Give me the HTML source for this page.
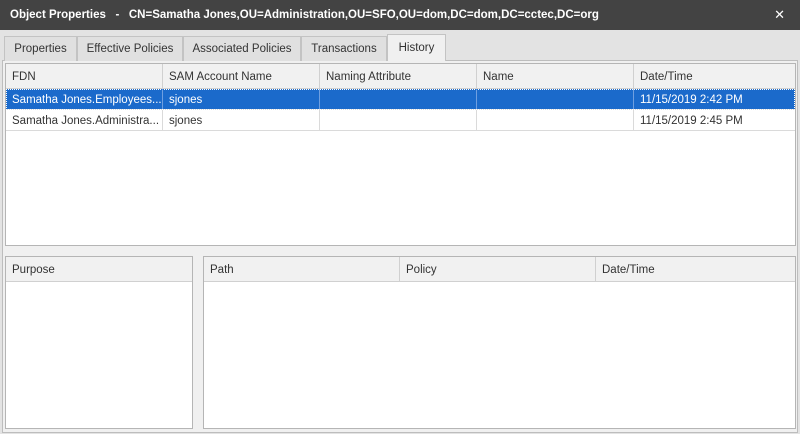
<!DOCTYPE html>
<html><head><style>
*{margin:0;padding:0;box-sizing:border-box}
body{width:800px;height:434px;background:#e3e3e3;font-family:"Liberation Sans",sans-serif;font-size:11.5px;color:#333;position:relative;overflow:hidden}
.a{position:absolute}
.title{left:0;top:0;width:800px;height:30px;background:#434343;color:#fff;font-weight:bold;font-size:11.5px;line-height:30px;padding-left:10px;white-space:pre}
.x{right:15px;top:7px;color:#fff;font-size:13px}
.tab{top:36px;height:25px;background:#e0e0e0;border:1px solid #c3c3c3;border-bottom:none;line-height:24px;text-align:center}
.panel{left:2px;top:60px;width:796px;height:373px;background:#f0f0f0;border:1px solid #bdbdbd}
.box{background:#fff;border:1px solid #b5b5b5}
.hdr{height:25px;background:#f1f1f1;border-bottom:1px solid #d0d0d0;position:relative}
.hc{position:absolute;top:0;height:24px;line-height:26px;padding-left:6px;border-right:1px solid #d0d0d0}
.row{position:absolute;left:0;height:21px;width:100%;border-bottom:1px solid #dadada}
.c{position:absolute;top:0;height:20px;line-height:22px;padding-left:6px;border-right:1px solid #dadada;white-space:nowrap;overflow:hidden}
.sel{background:#1b6acb;color:#fff;outline:1px dotted #fff;outline-offset:-1px}
.sel .c{border-right-color:#6f9fe0}
</style></head><body>
<div class="a title">Object Properties   -   CN=Samatha Jones,OU=Administration,OU=SFO,OU=dom,DC=dom,DC=cctec,DC=org</div>
<div class="a x">✕</div>
<div class="a panel"></div>
<div class="a tab" style="left:4px;width:73px">Properties</div>
<div class="a tab" style="left:77px;width:106px">Effective Policies</div>
<div class="a tab" style="left:183px;width:118px">Associated Policies</div>
<div class="a tab" style="left:301px;width:86px">Transactions</div>
<div class="a tab" style="left:387px;top:34px;height:27px;width:59px;background:#f0f0f0;line-height:27px">History</div>

<div class="a box" style="left:5px;top:63px;width:791px;height:183px">
 <div class="hdr">
  <div class="hc" style="left:0;width:157px">FDN</div>
  <div class="hc" style="left:157px;width:157px">SAM Account Name</div>
  <div class="hc" style="left:314px;width:157px">Naming Attribute</div>
  <div class="hc" style="left:471px;width:157px">Name</div>
  <div class="hc" style="left:628px;width:161px;border:none">Date/Time</div>
 </div>
 <div class="row sel" style="top:25px">
  <div class="c" style="left:0;width:157px">Samatha Jones.Employees....</div>
  <div class="c" style="left:157px;width:157px">sjones</div>
  <div class="c" style="left:314px;width:157px"></div>
  <div class="c" style="left:471px;width:157px"></div>
  <div class="c" style="left:628px;width:161px;border:none">11/15/2019 2:42 PM</div>
 </div>
 <div class="row" style="top:46px">
  <div class="c" style="left:0;width:157px">Samatha Jones.Administra...</div>
  <div class="c" style="left:157px;width:157px">sjones</div>
  <div class="c" style="left:314px;width:157px"></div>
  <div class="c" style="left:471px;width:157px"></div>
  <div class="c" style="left:628px;width:161px;border:none">11/15/2019 2:45 PM</div>
 </div>
</div>

<div class="a box" style="left:5px;top:256px;width:188px;height:173px">
 <div class="hdr"><div class="hc" style="left:0;width:186px;border:none">Purpose</div></div>
</div>
<div class="a box" style="left:203px;top:256px;width:593px;height:173px">
 <div class="hdr">
  <div class="hc" style="left:0;width:196px">Path</div>
  <div class="hc" style="left:196px;width:196px">Policy</div>
  <div class="hc" style="left:392px;width:199px;border:none">Date/Time</div>
 </div>
</div>
</body></html>
